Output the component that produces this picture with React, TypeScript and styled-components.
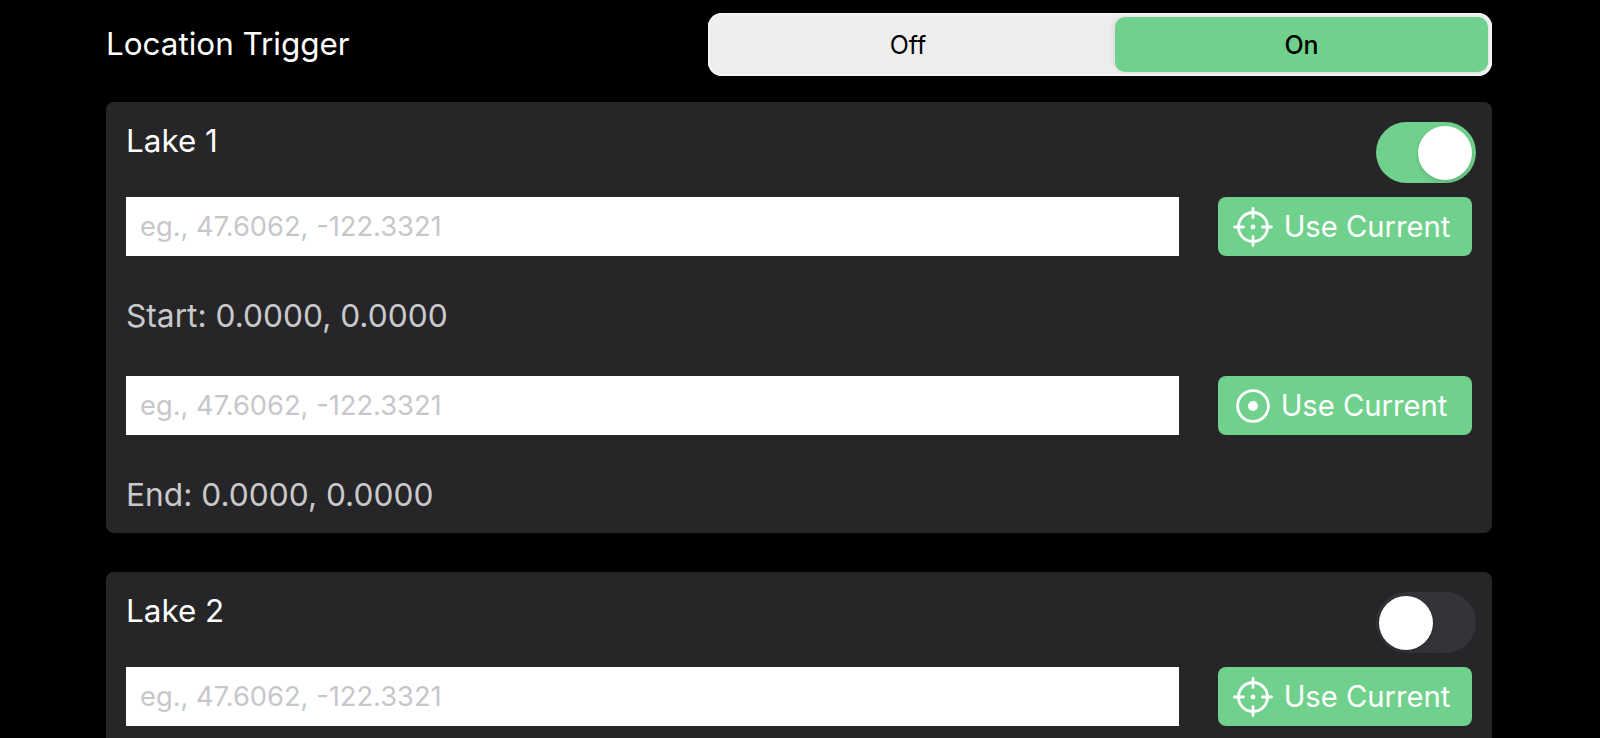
import React from "react";
import styled, { createGlobalStyle } from "styled-components";

const GlobalStyle = createGlobalStyle`
  html, body {
    margin: 0;
    padding: 0;
    height: 100%;
    background: #000;
    overflow: hidden;
    font-family: Inter, "Liberation Sans", sans-serif;
  }
`;

const GREEN = "#70d18c";

const Page = styled.div`
  box-sizing: border-box;
  display: flex;
  flex-direction: column;
  width: 1600px;
  height: 738px;
  padding: 13px 108px 0 106px;
  overflow: hidden;
  background: #000;
`;

const TriggerRow = styled.div`
  display: flex;
  align-items: center;
  justify-content: space-between;
  margin-bottom: 26px;
`;

const TriggerLabel = styled.span`
  color: #fff;
  font-size: 31.4px;
  line-height: 36px;
  margin-top: -2px;
`;

const Segmented = styled.div`
  box-sizing: border-box;
  display: flex;
  width: 784px;
  height: 63px;
  padding: 4px;
  background: #eeeeee;
  border-radius: 14px;
  box-shadow: inset 0 0 0 1.5px #f8f8f8;
`;

const Segment = styled.div<{ $active?: boolean }>`
  display: flex;
  align-items: center;
  justify-content: center;
  box-sizing: border-box;
  color: #000;
  font-size: 25px;
  font-weight: ${(p) => (p.$active ? 500 : 400)};
  ${(p) =>
    p.$active
      ? `width: 373px; background: ${GREEN}; border-radius: 10px; box-shadow: -2px 0 5px rgba(0,0,0,0.08);`
      : "flex: 1; padding-right: 11px;"}
`;

const Card = styled.section`
  padding: 20px 20px 0;
  margin-bottom: 39px;
  background: #262628;
  border-radius: 8px;

  &:last-child {
    flex: 1;
    margin-bottom: 0;
    border-radius: 8px 8px 0 0;
  }
`;

const CardHeader = styled.div`
  display: flex;
  justify-content: space-between;
  align-items: flex-start;
  height: 61px;
  margin-bottom: 14px;
`;

const CardTitle = styled.h2`
  margin: 0;
  color: #fff;
  font-size: 31.4px;
  font-weight: 400;
  line-height: 38px;
`;

const Toggle = styled.div<{ $on?: boolean }>`
  box-sizing: border-box;
  display: flex;
  justify-content: ${(p) => (p.$on ? "flex-end" : "flex-start")};
  align-items: center;
  width: 100px;
  height: 61px;
  margin-right: -4px;
  padding: 0 4px 0 3px;
  border-radius: 31px;
  background: ${(p) => (p.$on ? GREEN : "#333338")};
`;

const Knob = styled.div`
  width: 54px;
  height: 54px;
  border-radius: 50%;
  background: #fff;
  box-shadow: 0 2px 4px rgba(0, 0, 0, 0.15);
`;

const LocationGroup = styled.div`
  & + & {
    margin-top: 22px;
  }
`;

const InputRow = styled.div`
  display: flex;
  justify-content: space-between;
  height: 59px;
`;

const CoordInput = styled.input`
  box-sizing: border-box;
  width: 1053px;
  height: 59px;
  padding: 0 14px;
  border: 0;
  border-radius: 0;
  outline: 0;
  background: #fff;
  color: #000;
  font-family: inherit;
  font-size: 27.3px;

  &::placeholder {
    color: #c7c7cb;
    opacity: 1;
  }
`;

const UseCurrent = styled.button`
  display: flex;
  align-items: center;
  justify-content: center;
  gap: 11px;
  box-sizing: border-box;
  width: 254px;
  height: 59px;
  padding: 0 7px 0 0;
  border: 0;
  border-radius: 8px;
  background: ${GREEN};
  color: #fff;
  font-family: inherit;
  font-size: 29.2px;
  white-space: nowrap;
`;

const Status = styled.p`
  margin: 0;
  padding: 42px 0 20px;
  color: #c9c9cc;
  font-size: 31.7px;
  line-height: 36px;
`;

const CrosshairIcon = () => (
  <svg width="40" height="40" viewBox="0 0 40 40" fill="none" stroke="#fff" strokeWidth="2.8" strokeLinecap="round">
    <circle cx="20" cy="20" r="14.5" />
    <path d="M20 1.5v9M20 29.5v9M1.5 20h9M29.5 20h9" />
    <circle cx="20" cy="20" r="2.4" fill="#fff" stroke="none" />
  </svg>
);

const TargetIcon = () => (
  <svg width="34" height="34" viewBox="0 0 34 34" fill="none" stroke="#fff" strokeWidth="2.8">
    <circle cx="17" cy="17" r="15.4" />
    <circle cx="17" cy="17" r="5" fill="#fff" stroke="none" />
  </svg>
);

const start = { label: "Start", icon: <CrosshairIcon />, status: "Start: 0.0000, 0.0000" };
const end = { label: "End", icon: <TargetIcon />, status: "End: 0.0000, 0.0000" };

// Lake 2 runs off the bottom of the screen, so only its first row is there
const lakes = [
  { name: "Lake 1", on: true, points: [start, end] },
  { name: "Lake 2", on: false, points: [{ ...start, status: "" }] },
];

export default function App() {
  return (
    <Page>
      <GlobalStyle />
      <TriggerRow>
        <TriggerLabel>Location Trigger</TriggerLabel>
        <Segmented>
          <Segment>Off</Segment>
          <Segment $active>On</Segment>
        </Segmented>
      </TriggerRow>
      {lakes.map((lake) => (
        <Card key={lake.name}>
          <CardHeader>
            <CardTitle>{lake.name}</CardTitle>
            <Toggle $on={lake.on}>
              <Knob />
            </Toggle>
          </CardHeader>
          {lake.points.map((point) => (
            <LocationGroup key={point.label}>
              <InputRow>
                <CoordInput placeholder="eg., 47.6062, -122.3321" />
                <UseCurrent>
                  {point.icon}
                  Use Current
                </UseCurrent>
              </InputRow>
              {point.status && <Status>{point.status}</Status>}
            </LocationGroup>
          ))}
        </Card>
      ))}
    </Page>
  );
}
